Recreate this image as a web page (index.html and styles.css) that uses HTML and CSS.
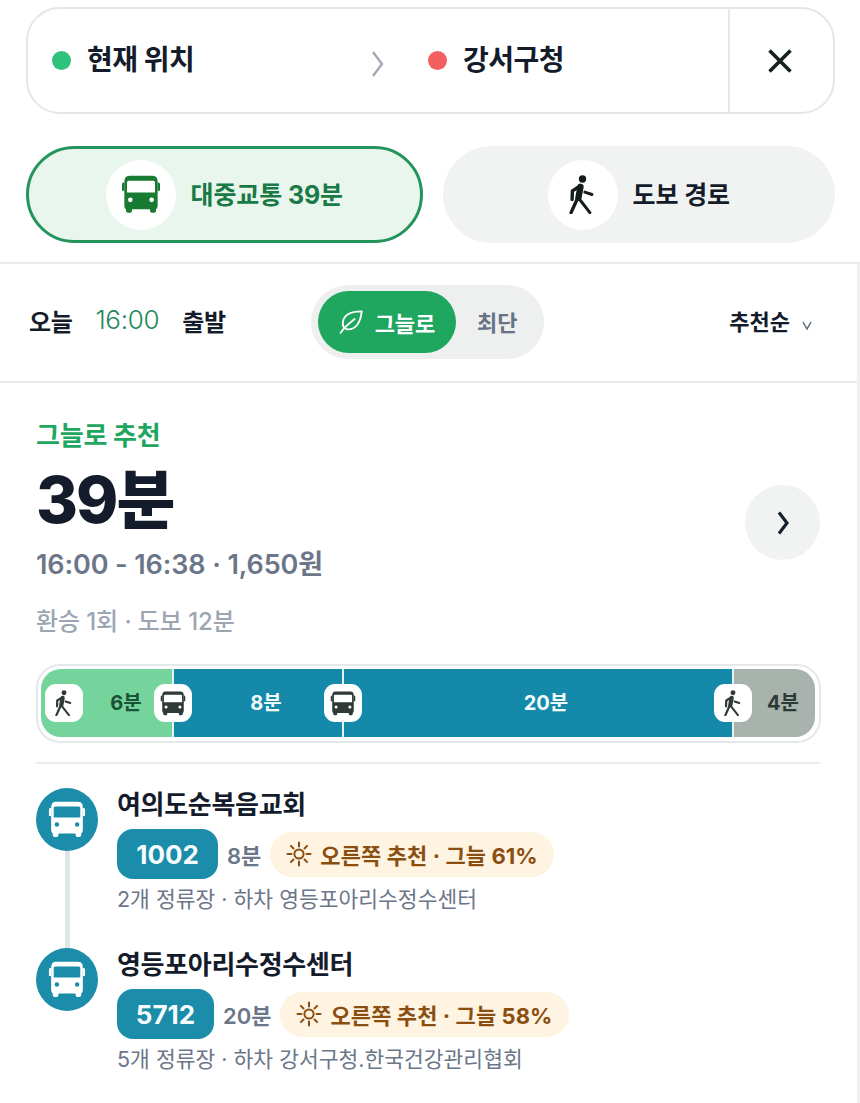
FILE: index.html
```html
<!DOCTYPE html>
<html lang="ko">
<head>
<meta charset="utf-8">
<title>경로</title>
<link rel="stylesheet" href="styles.css">
</head>
<body>
<svg class="defs" width="0" height="0" aria-hidden="true">
  <symbol id="bus" viewBox="45 45 120 116">
    <path fill-rule="evenodd" d="M70 47H140Q155 47 155 65V135Q155 145 150 147V152Q150 158 144 158H138Q132 158 132 152V147H78V152Q78 158 72 158H66Q60 158 60 152V147Q55 145 55 135V65Q55 47 70 47ZM68 62H142Q147 62 147 67V97H63V67Q63 62 68 62ZM66 119a7 7 0 1 0 14 0a7 7 0 1 0 -14 0ZM130 119a7 7 0 1 0 14 0a7 7 0 1 0 -14 0Z"/>
    <path d="M48 72Q48 66 55 66V92H48ZM162 72Q162 66 155 66V92H162Z"/>
  </symbol>
  <symbol id="walk" viewBox="45 45 116 116">
    <circle cx="103" cy="57" r="11"/>
    <g fill="none" stroke="currentColor" stroke-linecap="round" stroke-linejoin="round">
      <path d="M97 80L91 112" stroke-width="19"/>
      <path d="M92 80L73 92L72 118" stroke-width="10"/>
      <path d="M110 96L131 103" stroke-width="9"/>
      <path d="M88 115L69 157" stroke-width="10"/>
      <path d="M90 112L125 157" stroke-width="9"/>
    </g>
  </symbol>
  <symbol id="sun" viewBox="0 0 26 26">
    <circle cx="13" cy="13" r="4.6" fill="none" stroke="currentColor" stroke-width="2"/>
    <path d="M13 1.5v4M13 20.5v4M1.5 13h4M20.5 13h4M4.9 4.9l2.6 2.6M18.5 18.5l2.6 2.6M4.9 21.1l2.6-2.6M18.5 7.5l2.6-2.6" fill="none" stroke="currentColor" stroke-width="2" stroke-linecap="round"/>
  </symbol>
</svg>

<header class="top">
  <div class="search">
    <div class="place place-from"><span class="dot dot-green"></span><span class="place-name">현재 위치</span></div>
    <svg class="place-sep" width="14" height="26" viewBox="0 0 14 26"><path d="M2 1l9 12-9 12" fill="none" stroke="#a3a9b8" stroke-width="2.4"/></svg>
    <div class="place place-to"><span class="dot dot-red"></span><span class="place-name">강서구청</span></div>
    <button class="close" type="button" aria-label="닫기">
      <svg width="26" height="26" viewBox="0 0 26 26"><path d="M2.5 2.5l21 21M23.5 2.5l-21 21" stroke="#16201c" stroke-width="3.6" fill="none"/></svg>
    </button>
  </div>
  <div class="modes">
    <div class="mode mode-on">
      <span class="mode-icon"><svg class="ic-bus-lg"><use href="#bus"/></svg></span>
      <span class="mode-label">대중교통 39분</span>
    </div>
    <div class="mode mode-off">
      <span class="mode-icon"><svg class="ic-walk-lg"><use href="#walk"/></svg></span>
      <span class="mode-label">도보 경로</span>
    </div>
  </div>
</header>

<main class="lower">
  <div class="filters">
    <div class="depart">
      <span>오늘</span>
      <span class="depart-time">16:00</span>
      <span>출발</span>
    </div>
    <div class="toggle">
      <span class="toggle-on">
        <svg width="24" height="24" viewBox="35 28 72 72"><path d="M103 32C75 32 52 38 47 62C44 75 50 84 60 86C85 88 100 65 103 32ZM40 96C52 78 65 68 82 55" fill="none" stroke="#fff" stroke-width="5.5" stroke-linecap="round" stroke-linejoin="round"/></svg>
        그늘로
      </span>
      <span class="toggle-off">최단</span>
    </div>
    <div class="sort"><span>추천순</span><svg width="10" height="9" viewBox="0 0 10 9"><path d="M1 1l4 7 4-7" fill="none" stroke="#5f6a7a" stroke-width="1.5"/></svg></div>
  </div>

  <section class="route">
    <div class="summary">
      <div class="summary-text">
        <p class="eyebrow">그늘로 추천</p>
        <h1 class="duration">39분</h1>
        <p class="times">16:00 - 16:38 · 1,650원</p>
        <p class="meta">환승 1회 · 도보 12분</p>
      </div>
      <button class="next" type="button" aria-label="자세히">
        <svg width="14" height="24" viewBox="0 0 14 24"><path d="M3 1.5l8 10.5-8 10.5" fill="none" stroke="#16202e" stroke-width="3.2"/></svg>
      </button>
    </div>

    <div class="bar">
      <div class="seg seg-walk seg-6">
        <span class="chip chip-start"><svg class="ic-walk-sm"><use href="#walk"/></svg></span>
        <span class="seg-label">6분</span>
      </div>
      <div class="seg seg-bus seg-8">
        <span class="chip chip-edge"><svg class="ic-bus-sm"><use href="#bus"/></svg></span>
        <span class="seg-label">8분</span>
      </div>
      <div class="seg seg-bus seg-20">
        <span class="chip chip-edge"><svg class="ic-bus-sm"><use href="#bus"/></svg></span>
        <span class="seg-label">20분</span>
      </div>
      <div class="seg seg-end seg-4">
        <span class="chip chip-edge"><svg class="ic-walk-sm"><use href="#walk"/></svg></span>
        <span class="seg-label">4분</span>
      </div>
    </div>

    <ol class="legs">
      <li class="leg leg-first">
        <span class="leg-node"><svg class="ic-node"><use href="#bus"/></svg></span>
        <div class="leg-body">
          <h2 class="leg-title">여의도순복음교회</h2>
          <div class="leg-row">
            <span class="line-no line-1002">1002</span>
            <span class="leg-min">8분</span>
            <span class="shade"><svg class="ic-sun"><use href="#sun"/></svg>오른쪽 추천 · 그늘 61%</span>
          </div>
          <p class="leg-sub">2개 정류장 · 하차 영등포아리수정수센터</p>
        </div>
      </li>
      <li class="leg">
        <span class="leg-node"><svg class="ic-node"><use href="#bus"/></svg></span>
        <div class="leg-body">
          <h2 class="leg-title">영등포아리수정수센터</h2>
          <div class="leg-row">
            <span class="line-no line-5712">5712</span>
            <span class="leg-min">20분</span>
            <span class="shade"><svg class="ic-sun"><use href="#sun"/></svg>오른쪽 추천 · 그늘 58%</span>
          </div>
          <p class="leg-sub">5개 정류장 · 하차 강서구청.한국건강관리협회</p>
        </div>
      </li>
    </ol>
  </section>
</main>
</body>
</html>
```

FILE: styles.css
```css
* { box-sizing: border-box; }
html, body { margin: 0; padding: 0; }
body {
  width: 860px;
  height: 1103px;
  overflow: hidden;
  background: #fff;
  color: #141c2b;
  font-family: "Inter", "Noto Sans CJK KR", "Noto Sans", sans-serif;
}
h1, h2, p, ol { margin: 0; padding: 0; }
ol { list-style: none; }
button { border: 0; padding: 0; background: none; font: inherit; }
svg { display: block; fill: currentColor; }
.defs { position: absolute; }

/* header */
.top { padding: 7px 25px 19px 26px; border-bottom: 2px solid #e9eceb; height: 264px; }
.search {
  display: flex;
  align-items: center;
  height: 107px;
  border: 2px solid #e4e7e7;
  border-radius: 34px;
  padding-left: 24px;
}
.place { display: flex; align-items: center; gap: 16px; }
.place-from { width: 319px; }
.place-to { width: 300px; }
.place-sep { margin-right: 43px; margin-top: 6px; }
.dot { width: 19px; height: 19px; border-radius: 50%; flex: none; }
.dot-green { background: #2fc27a; }
.dot-red { background: #f25f5f; }
.place-name { font-size: 28px; font-weight: 700; letter-spacing: -0.5px; line-height: 1; margin-top: -1px; }
.close {
  flex: 1;
  align-self: stretch;
  display: flex;
  align-items: center;
  justify-content: center;
  border-left: 2px solid #e6e8e8;
  padding-right: 4px;
}
.modes { display: flex; gap: 20px; margin-top: 32px; }
.mode {
  display: flex;
  align-items: center;
  justify-content: center;
  gap: 15px;
  height: 97px;
  border-radius: 49px;
  font-size: 25px;
  font-weight: 700;
}
.mode-label { margin-top: -4px; letter-spacing: -0.1px; }
.mode-on { width: 397px; background: #e9f6ee; border: 3px solid #23945c; color: #197a45; }
.mode-off { width: 393px; background: #f1f3f2; color: #141c2b; }
.mode-icon {
  width: 70px;
  height: 70px;
  border-radius: 50%;
  background: #fff;
  display: flex;
  align-items: center;
  justify-content: center;
}
.ic-bus-lg { width: 40px; height: 39px; color: #197a32; }
.ic-walk-lg { width: 39px; height: 39px; color: #141c1c; }

/* filter row */
.lower { border-right: 3px solid #eef1f0; height: 839px; }
.filters {
  position: relative;
  display: flex;
  align-items: center;
  height: 119px;
  border-bottom: 2px solid #e9eceb;
  padding: 0 0 2px 29px;
  font-size: 24px;
  font-weight: 600;
}
.depart { display: flex; align-items: center; gap: 23px; width: 282px; letter-spacing: -0.4px; }
.depart > span { margin-top: -3px; }
.depart-time { color: #23875a; font-weight: 300; font-size: 26px; letter-spacing: -0.3px; line-height: 1; }
.toggle {
  display: flex;
  align-items: center;
  width: 233px;
  height: 74px;
  border-radius: 37px;
  background: #edf0ef;
  padding-left: 7px;
}
.toggle-on {
  display: flex;
  align-items: center;
  justify-content: center;
  gap: 12px;
  width: 138px;
  height: 62px;
  border-radius: 31px;
  background: #1fa65f;
  color: #fff;
  font-size: 22px;
  font-weight: 700;
}
.toggle-off { margin-left: 21px; color: #677284; font-size: 22px; font-weight: 600; margin-top: -2px; }
.sort { display: flex; align-items: center; gap: 12px; margin-left: auto; margin-right: 45px; font-size: 22px; }
.sort span { margin-top: -3px; }
.sort svg { margin-top: 8px; }

/* route */
.route { padding: 35px 0 0 36px; }
.summary { display: flex; align-items: center; justify-content: space-between; padding-right: 37px; }
.eyebrow { color: #1fa65f; font-size: 26px; font-weight: 700; line-height: 36px; letter-spacing: -0.2px; }
.duration { font-size: 64px; font-weight: 800; line-height: 76px; letter-spacing: -2px; margin-top: 8px; color: #141c2b; }
.times { color: #6b7688; font-size: 27px; font-weight: 600; line-height: 38px; margin-top: 8px; letter-spacing: -0.1px; }
.meta { color: #9ca5b2; font-size: 24px; font-weight: 500; line-height: 34px; margin-top: 21px; letter-spacing: -0.1px; }
.next {
  width: 75px;
  height: 75px;
  border-radius: 50%;
  background: #f1f3f2;
  display: flex;
  align-items: center;
  justify-content: center;
  margin-top: -12px;
}
.bar {
  display: flex;
  width: 785px;
  height: 79px;
  margin-top: 25px;
  border: 2px solid #e4e8e8;
  border-radius: 24px;
  padding: 3px 3px 4px;
  background: #fff;
}
.seg {
  position: relative;
  display: flex;
  align-items: center;
  justify-content: center;
  height: 100%;
  font-size: 20px;
  font-weight: 700;
}
.seg + .seg { border-left: 2px solid #e8f2f2; }
.seg-label { margin-top: -3px; }
.seg-6 { width: 131px; }
.seg-8 { width: 170px; }
.seg-20 { width: 390px; }
.seg-4 { width: 83px; }
.seg-walk { background: #74d49b; color: #1c5236; border-radius: 20px 0 0 20px; padding-left: 59px; padding-right: 20px; }
.seg-bus { background: #1589a9; color: #f2fbfb; padding-left: 16px; }
.seg-end { background: #a8b3ae; color: #2c3a34; border-radius: 0 20px 20px 0; padding-left: 17px; }
.chip {
  position: absolute;
  top: 15px;
  width: 38px;
  height: 38px;
  border-radius: 11px;
  background: #fff;
  display: flex;
  align-items: center;
  justify-content: center;
  color: #2f3a36;
  z-index: 1;
}
.chip-start { left: 4px; }
.chip-edge { left: -20px; }
.ic-bus-sm { width: 26px; height: 25px; }
.ic-walk-sm { width: 26px; height: 26px; }

/* legs */
.legs { width: 784px; margin-top: 19px; border-top: 2px solid #e9eceb; padding-top: 24px; }
.leg { position: relative; display: flex; gap: 19px; height: 160px; }
.leg-first::before {
  content: "";
  position: absolute;
  left: 29px;
  top: 60px;
  width: 5px;
  height: 104px;
  background: #dfe7e5;
}
.leg-node {
  position: relative;
  flex: none;
  width: 62px;
  height: 63px;
  border-radius: 50%;
  background: #1b8ca9;
  display: flex;
  align-items: center;
  justify-content: center;
  color: #fff;
}
.ic-node { width: 38px; height: 37px; }
.leg-title { font-size: 26px; font-weight: 700; line-height: 34px; letter-spacing: -0.3px; color: #141c2b; }
.leg-row { display: flex; align-items: center; margin-top: 7px; }
.line-no {
  display: flex;
  align-items: center;
  justify-content: center;
  height: 50px;
  border-radius: 16px;
  background: #1b8ca9;
  color: #f6fcfd;
  font-size: 26px;
  font-weight: 700;
}
.line-1002 { width: 101px; }
.line-5712 { width: 97px; }
.leg-min { margin-left: 9px; margin-right: 9px; color: #6b7688; font-size: 22px; font-weight: 600; }
.shade {
  display: flex;
  align-items: center;
  gap: 8px;
  height: 45px;
  padding: 0 16px;
  border-radius: 23px;
  background: #fff3e2;
  color: #8a4f10;
  font-size: 22px;
  font-weight: 700;
  letter-spacing: 0.1px;
}
.ic-sun { width: 26px; height: 26px; }
.leg-sub { color: #6b7688; font-size: 21.5px; font-weight: 400; line-height: 30px; margin-top: 5px; }
```
